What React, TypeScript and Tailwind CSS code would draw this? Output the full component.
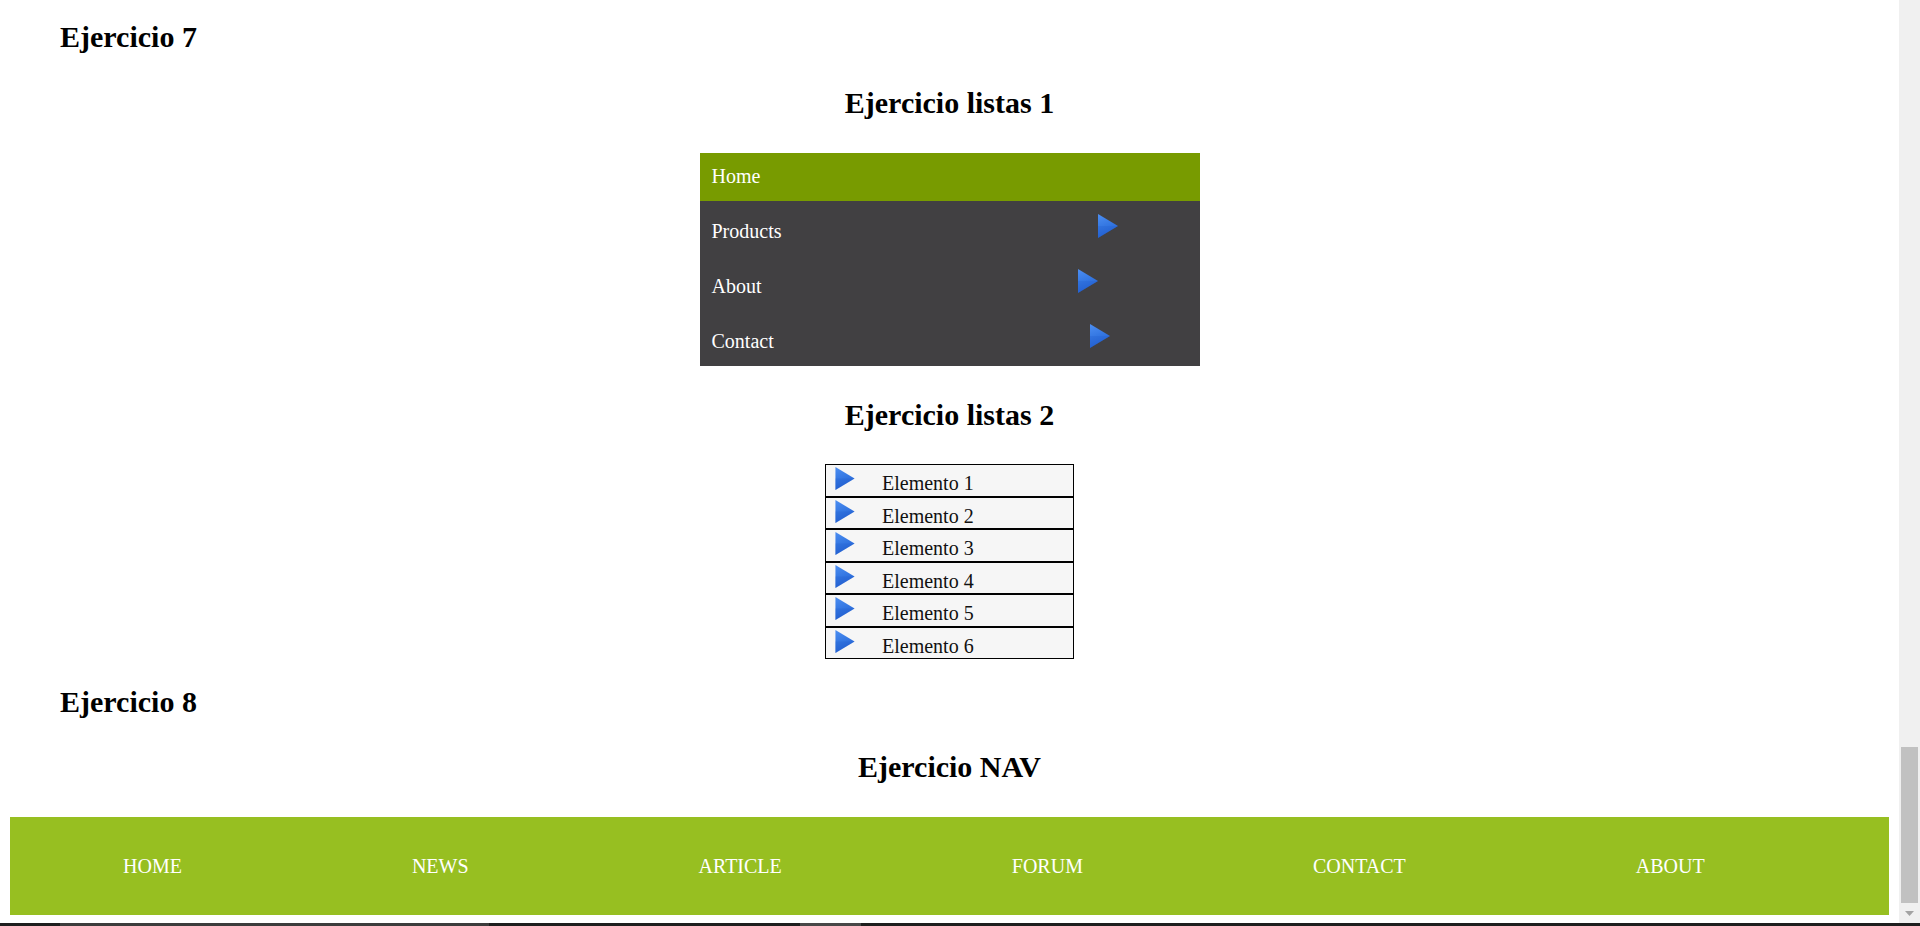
import React from 'react';

// blue "play" bullet used by both lists
const Arrow = ({ className }: { className?: string }) => (
  <svg viewBox="0 0 20 24" className={className} aria-hidden="true">
    <defs>
      <linearGradient id="arrowFill" x1="0" y1="0" x2="0.3" y2="1">
        <stop offset="0%" stopColor="#4d8ff2" />
        <stop offset="55%" stopColor="#3477e2" />
        <stop offset="100%" stopColor="#2461d2" />
      </linearGradient>
    </defs>
    <polygon points="0,0 20,12 0,24" fill="url(#arrowFill)" />
    <polygon points="0,12 20,12 0,24" fill="#1f5acb" opacity="0.25" />
  </svg>
);

const menuItems = ['Products', 'About', 'Contact'];
const listItems = ['Elemento 1', 'Elemento 2', 'Elemento 3', 'Elemento 4', 'Elemento 5', 'Elemento 6'];
const navItems = ['HOME', 'NEWS', 'ARTICLE', 'FORUM', 'CONTACT', 'ABOUT'];

const Heading = ({ children, center }: { children: React.ReactNode; center?: boolean }) => (
  <h2 className={`text-[30px] font-bold leading-[34px] text-black ${center ? 'text-center' : 'pl-[50px]'}`}>
    {children}
  </h2>
);

export default function App() {
  return (
    <div className="flex h-[926px] w-[1920px] flex-col overflow-hidden bg-white font-['Liberation_Serif',serif]">
      <div className="flex h-[923px]">
        {/* page content */}
        <div className="flex flex-1 flex-col px-[10px]">
          <div className="mt-[20px]">
            <Heading>Ejercicio 7</Heading>
          </div>
          <div className="mt-[32px]">
            <Heading center>Ejercicio listas 1</Heading>
          </div>

          <ul className="mx-auto mt-[33px] w-[500px] bg-[#414042] text-[20px] leading-[23px] text-white">
            <li className="h-[48px] bg-[#789b00] px-[12px] pt-[12px]">Home</li>
            {menuItems.map((item) => (
              <li key={item} className="h-[55px] px-[12px] pt-[13px] whitespace-nowrap">
                <span>{item}</span>
                <Arrow className="ml-[316px] inline-block h-[24px] w-[20px] align-baseline" />
              </li>
            ))}
          </ul>

          <div className="mt-[32px]">
            <Heading center>Ejercicio listas 2</Heading>
          </div>

          <ul className="mx-auto mt-[32px] w-[249px] text-[20px] leading-[23px] text-[#111]">
            {listItems.map((item) => (
              <li key={item} className="box-border h-[32.5px] border border-black bg-[#f6f6f6] pl-[9px] pt-[2px] whitespace-nowrap">
                <Arrow className="inline-block h-[23px] w-[20px] align-baseline" />
                <span className="ml-[27px]">{item}</span>
              </li>
            ))}
          </ul>

          <div className="mt-[26px]">
            <Heading>Ejercicio 8</Heading>
          </div>
          <div className="mt-[31px]">
            <Heading center>Ejercicio NAV</Heading>
          </div>

          <nav className="mt-[33px] flex h-[98px] items-center gap-[230px] bg-[#97bf21] pl-[113px] text-[20px] leading-[23px] text-white">
            {navItems.map((item) => (
              <a key={item} href="#" className="whitespace-nowrap">
                {item}
              </a>
            ))}
          </nav>
        </div>

        {/* browser scrollbar */}
        <div className="flex w-[21px] flex-col bg-[#f0f0f0] px-[2px]">
          <div className="flex-1" />
          <div className="h-[156px] bg-[#c1c1c1]" />
          <div className="flex h-[20px] items-center justify-center">
            <svg viewBox="0 0 9 5" className="h-[5px] w-[9px]">
              <polygon points="0,0 9,0 4.5,5" fill="#a3a3a3" />
            </svg>
          </div>
        </div>
      </div>

      {/* taskbar edge */}
      <div className="flex h-[3px] bg-[#1e1e1e]">
        <div className="ml-[60px] w-[429px] bg-[#3c3c3c]" />
        <div className="ml-[311px] w-[61px] bg-[#484848]" />
      </div>
    </div>
  );
}
